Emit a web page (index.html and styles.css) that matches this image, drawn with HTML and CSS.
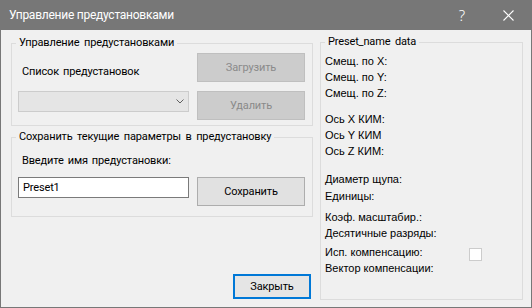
FILE: index.html
```html
<!DOCTYPE html>
<html lang="ru">
<head>
<meta charset="utf-8">
<title>Управление предустановками</title>
<link rel="stylesheet" href="styles.css">
</head>
<body>
<div class="window">
  <div class="titlebar">
    <span class="title">Управление предустановками</span>
    <span class="tb-btn help">?</span>
    <span class="tb-btn close">
      <svg width="11" height="11" viewBox="0 0 11 11"><path d="M0.5 0.5 L10.5 10.5 M10.5 0.5 L0.5 10.5" stroke="#fff" stroke-width="1.1" fill="none"/></svg>
    </span>
  </div>
  <div class="content">
    <div class="left-col">
      <fieldset class="group">
        <legend>Управление предустановками</legend>
        <div class="grid manage-grid">
          <div class="lbl list-lbl">Список предустановок</div>
          <button class="btn disabled" type="button">Загрузить</button>
          <div class="combo">
            <svg width="8" height="5" viewBox="0 0 8 5"><path d="M0.5 0.5 L4 4 L7.5 0.5" stroke="#606060" stroke-width="1" fill="none"/></svg>
          </div>
          <button class="btn disabled" type="button">Удалить</button>
        </div>
      </fieldset>
      <fieldset class="group save-group">
        <legend>Сохранить текущие параметры в предустановку</legend>
        <div class="grid save-grid">
          <div class="lbl save-lbl">Введите имя предустановки:</div>
          <input class="textbox" type="text" value="Preset1">
          <button class="btn" type="button">Сохранить</button>
        </div>
      </fieldset>
      <button class="btn close-btn" type="button">Закрыть</button>
    </div>
    <fieldset class="group data-group">
      <legend>Preset_name data</legend>
      <div class="data-body">
        <div class="sec sec-a">
          <div>Смещ. по X:</div>
          <div>Смещ. по Y:</div>
          <div>Смещ. по Z:</div>
        </div>
        <div class="sec sec-b">
          <div>Ось X КИМ:</div>
          <div>Ось Y КИМ</div>
          <div>Ось Z КИМ:</div>
        </div>
        <div class="sec sec-c">
          <div>Диаметр щупа:</div>
          <div>Единицы:</div>
        </div>
        <div class="sec sec-d">
          <div>Коэф. масштабир.:</div>
          <div>Десятичные разряды:</div>
        </div>
        <div class="sec sec-e">
          <div class="check-row"><span class="check-lbl">Исп. компенсацию:</span><span class="checkbox"></span></div>
          <div>Вектор компенсации:</div>
        </div>
      </div>
    </fieldset>
  </div>
</div>
</body>
</html>
```
FILE: styles.css
```css
html, body {
  margin: 0;
  padding: 0;
  background: #f0f0f0;
}
body {
  font-family: Roboto, "Noto Sans", sans-serif;
  color: #000;
}
.window {
  width: 532px;
  height: 308px;
  display: flex;
  flex-direction: column;
  background: #f0f0f0;
  box-sizing: border-box;
}
.titlebar {
  height: 30px;
  flex: 0 0 30px;
  background: #777777;
  color: #ffffff;
  display: flex;
  align-items: stretch;
}
.title {
  flex: 1;
  padding-left: 9px;
  font-size: 12px;
  letter-spacing: -0.25px;
  line-height: 30px;
  white-space: nowrap;
}
.tb-btn {
  width: 46px;
  display: flex;
  align-items: center;
  justify-content: center;
}
.help {
  font-family: "Noto Sans", sans-serif;
  font-size: 15px;
  line-height: 30px;
  font-weight: 300;
}
.tb-btn.close {
  width: 47px;
}
.content {
  flex: 1;
  display: flex;
  gap: 7px;
  padding: 5px 8px 7px 10px;
  border: 1px solid #777777;
  border-top: 0;
  min-height: 0;
}
.left-col {
  width: 302px;
  flex: 0 0 302px;
  display: flex;
  flex-direction: column;
  padding-top: 1px;
}
.group {
  margin: 0;
  padding: 0;
  border: 1px solid #dcdcdc;
  min-width: 0;
}
.group legend {
  padding: 0 3px;
  margin-left: 4px;
  font-size: 11px;
  letter-spacing: -0.15px;
  word-spacing: 2px;
  line-height: 14px;
  white-space: nowrap;
}
.grid {
  display: grid;
  grid-template-columns: 171px 108px;
  column-gap: 8px;
  padding-left: 6px;
  padding-right: 7px;
}
.manage-grid {
  grid-template-rows: 29px 29px;
  row-gap: 9px;
  padding-top: 3px;
  padding-bottom: 5px;
}
.lbl {
  font-size: 11px;
  letter-spacing: -0.15px;
  word-spacing: 1.5px;
  line-height: 16px;
  padding-left: 4px;
  white-space: nowrap;
}
.list-lbl {
  padding-top: 11px;
}
.combo {
  height: 21px;
  align-self: start;
  box-sizing: border-box;
  background: #e5e5e5;
  border: 1px solid #cccccc;
  display: flex;
  align-items: center;
  justify-content: flex-end;
  padding-right: 4px;
}
.btn {
  font-family: Roboto, "Noto Sans", sans-serif;
  font-size: 11px;
  letter-spacing: -0.15px;
  height: 29px;
  padding: 0;
  margin: 0;
  border: 1px solid #adadad;
  background: #e1e1e1;
  color: #000;
  box-sizing: border-box;
}
.btn.disabled {
  background: #cccccc;
  border-color: #bfbfbf;
  color: #8a8a8a;
}
.save-group {
  margin-top: 4px;
}
.save-grid {
  grid-template-rows: 16px 29px;
  row-gap: 8px;
  padding-top: 9px;
  padding-bottom: 10px;
}
.save-lbl {
  grid-column: 1 / span 2;
}
.textbox {
  height: 21px;
  width: 171px;
  box-sizing: border-box;
  margin: 0;
  padding: 0 4px;
  border: 1px solid #7a7a7a;
  background: #fff;
  font-family: Roboto, "Noto Sans", sans-serif;
  font-size: 11px;
  letter-spacing: -0.15px;
  color: #000;
  outline: none;
}
.close-btn {
  margin-top: auto;
  align-self: flex-end;
  margin-right: 2px;
  margin-bottom: 1px;
  width: 78px;
  height: 25px;
  border: 2px solid #0078d7;
  background: #e5e5e5;
}
.data-group {
  flex: 1;
}
.data-body {
  padding: 4px 0 0 4px;
  font-family: "Liberation Sans", Arial, sans-serif;
  font-size: 11px;
  line-height: 16px;
}
.sec-b { margin-top: 10px; }
.sec-c { margin-top: 12px; line-height: 17px; }
.sec-d { margin-top: 4px; }
.sec-e { margin-top: 4px; line-height: 15px; }
.check-row {
  display: flex;
  align-items: flex-start;
}
.check-lbl {
  width: 144px;
}
.checkbox {
  width: 13px;
  height: 13px;
  box-sizing: border-box;
  margin-top: 3px;
  background: #fff;
  border: 1px solid #cccccc;
}
```
